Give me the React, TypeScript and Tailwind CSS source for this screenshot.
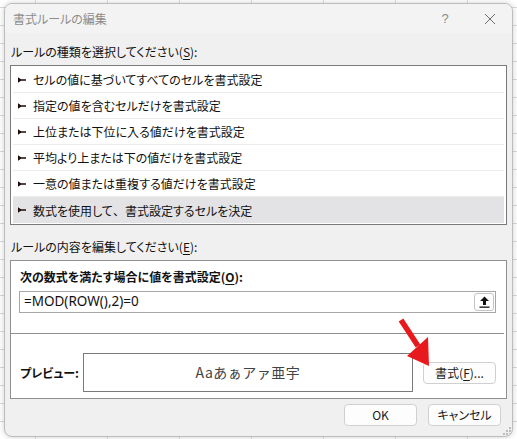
import React from "react";

const rules: React.ReactNode[] = [
  "セルの値に基づいてすべてのセルを書式設定",
  "指定の値を含むセルだけを書式設定",
  "上位または下位に入る値だけを書式設定",
  "平均より上または下の値だけを書式設定",
  "一意の値または重複する値だけを書式設定",
  <>
    数式を使用して<span className="[font-feature-settings:normal]">、</span>書式設定するセルを決定
  </>,
];

function Marker() {
  return (
    <svg width="8" height="6" viewBox="0 0 8 6" className="shrink-0">
      <polygon points="0,0.3 0,5.7 3,3.8 8,3.8 8,2.2 3,2.2" fill="#200808" />
    </svg>
  );
}

function Btn({ children, w = "w-[73px]" }: { children: React.ReactNode; w?: string }) {
  return (
    <div
      className={`${w} h-[22px] flex items-center justify-center rounded-[4px] border border-[#d0d0d0] bg-[#fdfdfd] text-[12px] text-[#1a1a1a] leading-none`}
    >
      {children}
    </div>
  );
}

export default function App() {
  return (
    <div className="w-[517px] h-[439px] overflow-hidden bg-white [background-image:linear-gradient(to_right,#dadada_1px,transparent_1px),linear-gradient(to_bottom,#dadada_1px,transparent_1px)] [background-size:72px_18px] [background-position:35px_7px] pt-[3px] pl-[4px] font-['Noto_Sans_CJK_JP','Noto_Sans',sans-serif] [font-feature-settings:'palt'] text-[#111]">
      <div className="relative w-[509px] h-[434px] rounded-[8px] border border-[#bcbcbc] bg-[#f0f0f0] shadow-[0_0_6px_rgba(0,0,0,0.18)] flex flex-col overflow-hidden">
        {/* Title bar */}
        <div className="h-[29px] shrink-0 flex items-center bg-[#f3f3f3]">
          <div className="pl-[8px] flex-1 text-[12px] text-[#8c8c8c] leading-none pt-[1px]">
            書式ルールの編集
          </div>
          <div className="w-[46px] h-full flex items-center justify-center text-[13px] text-[#8c8c8c] font-['Liberation_Sans',sans-serif]">
            ?
          </div>
          <div className="w-[44px] h-full flex items-center justify-center">
            <svg width="12" height="12" viewBox="0 0 12 12">
              <path d="M1 1 L11 11 M11 1 L1 11" stroke="#6e6e6e" strokeWidth="1" fill="none" />
            </svg>
          </div>
        </div>

        {/* Body */}
        <div className="flex-1 flex flex-col px-[5px]">
          <div className="mt-[11px] pl-[1px] h-[16px] text-[12px] leading-[16px]">
            ルールの種類を選択してください(<span className="underline underline-offset-2">S</span>):
          </div>

          {/* List box */}
          <div className="mt-[5px] h-[160px] border border-[#7a7a7a] bg-white px-[2px] py-[1px] flex flex-col">
            {rules.map((r, i) => (
              <div
                key={i}
                className={`h-[26px] shrink-0 flex items-center gap-[7px] pl-[5px] text-[12px] leading-none ${
                  i === rules.length - 1 ? "bg-[#e3e3e6]" : "border-b border-[#ececec]"
                }`}
              >
                <Marker />
                <span className="pt-[1px]">{r}</span>
              </div>
            ))}
          </div>

          <div className="mt-[14px] pl-[1px] h-[16px] text-[12px] leading-[16px]">
            ルールの内容を編集してください(<span className="underline underline-offset-2">E</span>):
          </div>

          {/* Panel */}
          <div className="mt-[5px] h-[139px] border border-[#8f8f8f] bg-white flex flex-col">
            <div className="mt-[8px] pl-[9px] h-[16px] text-[12px] leading-[16px] font-bold">
              次の数式を満たす場合に値を書式設定(<span className="underline underline-offset-2">O</span>):
            </div>
            <div className="mt-[6px] ml-[8px] mr-[10px] h-[22px] border border-[#a6a6a6] bg-white flex items-center pl-[4px] pr-[1px]">
              <div className="flex-1 text-[13.5px] leading-none font-['Noto_Sans',sans-serif] [font-feature-settings:normal] text-[#111]">
                =MOD(ROW(),2)=0
              </div>
              <div className="w-[20px] h-[18px] rounded-[3px] border border-[#c4c4c4] bg-white flex items-center justify-center">
                <svg width="11" height="12" viewBox="0 0 11 12">
                  <path d="M5.5 0.5 L10 5 L7 5 L7 9 L4 9 L4 5 L1 5 Z" fill="#111" />
                  <rect x="0.5" y="10.5" width="10" height="1.3" fill="#111" />
                </svg>
              </div>
            </div>
            <div className="mt-[20px] mr-[2px] h-px bg-[#8f8f8f]" />
            <div className="mt-[19px] flex items-center pl-[9px]">
              <div className="w-[63px] text-[12px] leading-none font-bold">プレビュー:</div>
              <div className="w-[330px] h-[39px] border border-[#7a7a7a] bg-white flex items-center justify-center text-[14px] tracking-[0.5px] text-[#444] [font-feature-settings:normal]">
                Aaあぁアァ亜宇
              </div>
              <div className="ml-[10px]">
                <Btn>
                  書式(<span className="underline underline-offset-2">F</span>)...
                </Btn>
              </div>
            </div>
          </div>

          {/* Bottom buttons */}
          <div className="mt-[5px] flex justify-end gap-[11px] pr-[6px]">
            <Btn>OK</Btn>
            <Btn>キャンセル</Btn>
          </div>
        </div>

        {/* Resize grip */}
        <svg className="absolute right-[1px] bottom-[1px]" width="8" height="8" viewBox="0 0 8 8">
          <rect x="6" y="0" width="2" height="2" fill="#bdbdbd" />
          <rect x="3" y="3" width="2" height="2" fill="#bdbdbd" />
          <rect x="6" y="3" width="2" height="2" fill="#bdbdbd" />
          <rect x="0" y="6" width="2" height="2" fill="#bdbdbd" />
          <rect x="3" y="6" width="2" height="2" fill="#bdbdbd" />
          <rect x="6" y="6" width="2" height="2" fill="#bdbdbd" />
        </svg>

        {/* Red annotation arrow */}
        <svg className="absolute left-0 top-0 pointer-events-none" width="509" height="434" viewBox="4 3 509 434">
          <line x1="400" y1="319" x2="417" y2="345" stroke="#e8191c" strokeWidth="5.5" />
          <polygon points="406,355 427,336 428,365" fill="#e8191c" />
        </svg>
      </div>
    </div>
  );
}
